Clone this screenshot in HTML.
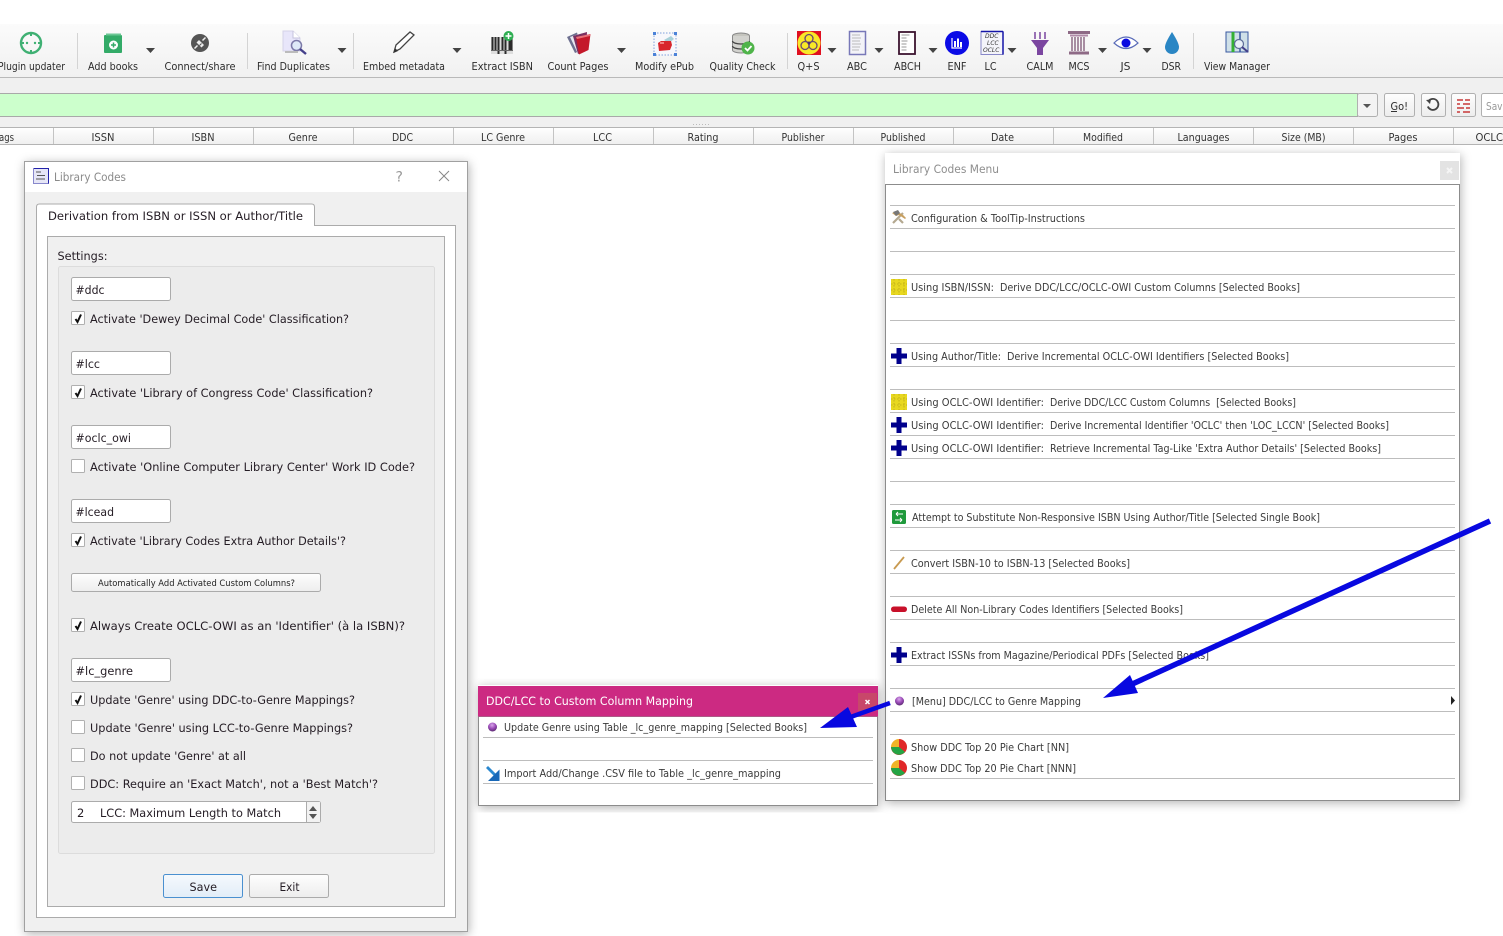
<!DOCTYPE html>
<html><head><meta charset="utf-8"><title>Library Codes</title>
<style>
html,body{margin:0;padding:0;background:#fff;width:1503px;height:936px;overflow:hidden}
svg{display:block}
text{font-family:"DejaVu Sans","Liberation Sans",sans-serif;white-space:pre;fill:#222}
.t{font-size:10.5px;fill:#2c2c2c}
.h{font-size:10.5px;fill:#333}
.d{font-size:11.5px;fill:#241c24}
.m{font-size:10.5px;fill:#3a3a3a}
.sep{stroke:#bdbdbd;stroke-width:1}
.tb{fill:#fff;stroke:#ababab}
.cb{fill:#fff;stroke:#b0b0b0}
.ck{fill:none;stroke:#111;stroke-width:2}
</style></head><body>
<svg width="1503" height="936" viewBox="0 0 1503 936" xmlns="http://www.w3.org/2000/svg">
<defs>
<linearGradient id="tbg" x1="0" y1="0" x2="0" y2="1"><stop offset="0" stop-color="#fbfbfb"/><stop offset="1" stop-color="#f1f1f1"/></linearGradient>
<linearGradient id="hbg" x1="0" y1="0" x2="0" y2="1"><stop offset="0" stop-color="#fff"/><stop offset="1" stop-color="#efefef"/></linearGradient>
<linearGradient id="btn" x1="0" y1="0" x2="0" y2="1"><stop offset="0" stop-color="#fefefe"/><stop offset="1" stop-color="#ededed"/></linearGradient>
<linearGradient id="sv" x1="0" y1="0" x2="0" y2="1"><stop offset="0" stop-color="#f5f9fd"/><stop offset="1" stop-color="#e2edf8"/></linearGradient>
<radialGradient id="sph" cx=".45" cy=".3" r=".7"><stop offset="0" stop-color="#d9a8ea"/><stop offset=".55" stop-color="#9b4bb8"/><stop offset="1" stop-color="#5a2a70"/></radialGradient>
<filter id="sh" x="-5%" y="-5%" width="110%" height="110%"><feDropShadow dx="1" dy="2" stdDeviation="5" flood-color="#000" flood-opacity=".3"/></filter>
</defs>

<!-- toolbar -->
<rect x="0" y="24" width="1503" height="53" fill="url(#tbg)"/>
<rect x="0" y="77" width="1503" height="50" fill="#f0f0f0"/>
<line x1="0" y1="77.5" x2="1503" y2="77.5" stroke="#b9b9b9"/>
<g stroke="#d4d4d4"><line x1="77.5" y1="33" x2="77.5" y2="69"/><line x1="247.5" y1="33" x2="247.5" y2="69"/><line x1="353.5" y1="33" x2="353.5" y2="69"/><line x1="787.5" y1="33" x2="787.5" y2="69"/><line x1="1193.5" y1="33" x2="1193.5" y2="69"/></g>

<!-- toolbar icons -->
<circle cx="31" cy="43" r="10" fill="none" stroke="#3fb073" stroke-width="2.4"/>
<path d="M31 32v4M31 50v4M20 43h4M38 43h4" stroke="#3fb073" stroke-width="2"/><circle cx="27" cy="43" r="1.2" fill="#3fb073"/><circle cx="35" cy="43" r="1.2" fill="#3fb073"/>
<rect x="104" y="35" width="18" height="18" rx="1" fill="#33ab68"/><rect x="106" y="33.500" width="15" height="2" fill="#6cc795"/><circle cx="113.500" cy="45" r="4.500" fill="#fff"/><path d="M113.500 42.500v5M111 45h5" stroke="#33ab68" stroke-width="1.500"/>
<circle cx="200" cy="43" r="9" fill="#555"/><path d="M194.500 48.500l3-3M205.500 37.500l-3 3" stroke="#eee" stroke-width="1.500"/><path d="M196.500 42.500l2.500-2.500 5 5-2.500 2.500z" fill="#eee"/><path d="M199.500 45.500l2-2" stroke="#555"/>
<path d="M283 31h10l7 7v13h-17z" fill="#e8e6fa" stroke="#d5d3e8"/><path d="M293 31v7h7" fill="#fff" stroke="#c5c3dc"/><circle cx="296.500" cy="45.500" r="5" fill="#dfeaf8" stroke="#7c7aa8" stroke-width="1.500"/><path d="M300 49l6 5" stroke="#44408a" stroke-width="2.400"/><path d="M285 52h13" stroke="#bbb" stroke-width="2"/>
<path d="M394 52l2-7 14-13 4 3-14 14z" fill="#fff" stroke="#444" stroke-width="1.300"/><path d="M393.500 53l1.500-5 3 3z" fill="#333"/>
<rect x="491" y="37" width="22" height="17" fill="#ddd"/><path d="M492.500 37v13M495.500 37v13M498.500 37v17M502.500 37v13M505.500 37v17M509.500 37v13M511.500 37v13" stroke="#2a2a2a" stroke-width="2"/><path d="M491 50.500h22" stroke="#666"/><circle cx="508.500" cy="36" r="5" fill="#2eae52"/><path d="M508.500 33v6M505.500 36h6" stroke="#fff" stroke-width="1.500"/>
<path d="M567 37L577 32.500L582 50L575 53z" fill="#6e7090"/><path d="M570 37L582 33L585 52L578 54z" fill="#e8e8f0"/><path d="M573 36L587 32L586 50L578 54z" fill="#7a3060"/><path d="M576 37L590.500 34L588.500 50L579 54.500z" fill="#c4182a"/><path d="M576 37L590.500 34L590 36L577 39z" fill="#e87078"/>
<rect x="654" y="33" width="22" height="22" fill="#f7f7fb" stroke="#7fa0dc" stroke-dasharray="1.500 1.500"/><g fill="#4b82d8"><rect x="653" y="32" width="3" height="3"/><rect x="674" y="32" width="3" height="3"/><rect x="653" y="53" width="3" height="3"/><rect x="674" y="53" width="3" height="3"/></g><path d="M664 40l7-4 3 3-5 4z" fill="#a8d0d8"/><path d="M658 43l3-2 10 0 1 4-2 5-11 1z" fill="#d8262c"/><path d="M660 42h4v2h-4z" fill="#f08080"/>
<ellipse cx="741" cy="36" rx="8.500" ry="3" fill="#c4c4be" stroke="#888"/><path d="M732.500 36v14a8.500 3 0 0 0 17 0v-14" fill="#d2d2ce" stroke="#888"/><path d="M732.500 41a8.500 3 0 0 0 17 0M732.500 46a8.500 3 0 0 0 17 0" fill="none" stroke="#444" stroke-width="1.300"/><circle cx="748" cy="48" r="6.500" fill="#4fb44a"/><path d="M745 48l2.500 2.500 4-4.500" fill="none" stroke="#fff" stroke-width="1.800"/>
<rect x="797" y="31" width="24" height="24" fill="#e01020"/><circle cx="809" cy="43" r="11.500" fill="#f8e828"/><g fill="none" stroke="#6a4a70" stroke-width="1.300"><circle cx="809" cy="38.500" r="4"/><circle cx="805" cy="45.500" r="4"/><circle cx="813" cy="45.500" r="4"/></g><circle cx="809" cy="43" r="1.500" fill="#4a2a78"/>
<rect x="849.500" y="31.500" width="16" height="23" fill="#f3f3f8" stroke="#7878b8" stroke-width="1.500"/><path d="M852 35h8M852 38h9M852 41h8M852 44h9M852 47h8M852 50h7" stroke="#bbb"/>
<rect x="899" y="32" width="16" height="22" fill="#fff" stroke="#3c1430" stroke-width="1.800"/><path d="M901.500 35h8M901.500 38h5M901.500 41h6M901.500 44h5M901.500 47h5M901.500 50h5" stroke="#999"/>
<circle cx="957" cy="43" r="12" fill="#0a0ae6"/><path d="M952 38v10h10" fill="none" stroke="#fff" stroke-width="1.200"/><path d="M955 41v6M958 38.500v8.500M961 42v5" stroke="#fff" stroke-width="2"/>
<rect x="981" y="31.500" width="22" height="23" fill="#f4f4fa" stroke="#8888c8"/><path d="M981 31.500h22M1003 31.500v23" stroke="#1414a8" stroke-width="1.500"/>
<text x="985" y="38" font-size="6" font-style="italic" style="fill:#333">DDC</text><text x="987" y="45" font-size="6" font-style="italic" style="fill:#333">LCC</text><text x="983" y="52" font-size="6" font-style="italic" style="fill:#333">OCLC</text>
<path d="M1031 40h18l-6 8v7h-6v-7z" fill="#7b46a0"/><path d="M1035 32v7M1040 32v7M1045 32v7" stroke="#7b46a0" stroke-width="1.500"/>
<path d="M1068 31h22v3h-22z" fill="#8e6a86"/><path d="M1070 34.500h18v2h-18z" fill="#b08aa8"/><path d="M1072 37v14M1075 37v14M1078 37v14M1081 37v14M1084 37v14" stroke="#8e6a86" stroke-width="1.500"/><path d="M1069 51.500h20v3h-20z" fill="#8e6a86"/>
<path d="M1114 43q12-12 24 0q-12 11-24 0z" fill="#fff" stroke="#5a6cb8" stroke-width="1.200"/><circle cx="1126" cy="43" r="4.500" fill="#0a0ae0"/>
<path d="M1172 32q-7 11-7 15a7 7 0 0 0 14 0q0-4-7-15z" fill="#2a86c4"/>
<rect x="1226" y="32" width="22" height="20" fill="#cfe0e8" stroke="#3858a0"/><path d="M1233 32v20" stroke="#34b034" stroke-width="3"/><path d="M1240 32v20" stroke="#3858a0" stroke-width="1.500"/><circle cx="1239" cy="44" r="4.500" fill="#e8f0f8" stroke="#5c6c98" stroke-width="1.200"/><path d="M1242 47l6 5" stroke="#44408a" stroke-width="2"/>

<!-- dropdown carets -->
<g fill="#444"><path d="M146 48h9l-4.500 5zM337.500 48h9l-4.500 5zM452.500 48h9l-4.500 5zM617 48h9l-4.500 5zM827.500 48h9l-4.500 5zM874.500 48h9l-4.500 5zM928.500 48h9l-4.500 5zM1007.500 48h9l-4.500 5zM1098 48h9l-4.500 5zM1142.500 48h9l-4.500 5z"/></g>

<!-- toolbar labels -->
<g class="t">
<text class="t" x="-2" y="70" textLength="67" lengthAdjust="spacingAndGlyphs">Plugin updater</text>
<text class="t" x="88" y="70" textLength="50" lengthAdjust="spacingAndGlyphs">Add books</text>
<text class="t" x="164.500" y="70" textLength="71" lengthAdjust="spacingAndGlyphs">Connect/share</text>
<text class="t" x="257" y="70" textLength="73" lengthAdjust="spacingAndGlyphs">Find Duplicates</text>
<text class="t" x="363" y="70" textLength="82" lengthAdjust="spacingAndGlyphs">Embed metadata</text>
<text class="t" x="471.500" y="70" textLength="61.500" lengthAdjust="spacingAndGlyphs">Extract ISBN</text>
<text class="t" x="547.500" y="70" textLength="61" lengthAdjust="spacingAndGlyphs">Count Pages</text>
<text class="t" x="635" y="70" textLength="59" lengthAdjust="spacingAndGlyphs">Modify ePub</text>
<text class="t" x="709.500" y="70" textLength="66" lengthAdjust="spacingAndGlyphs">Quality Check</text>
<text class="t" x="797.500" y="70" textLength="22" lengthAdjust="spacingAndGlyphs">Q+S</text>
<text class="t" x="847" y="70" textLength="20" lengthAdjust="spacingAndGlyphs">ABC</text>
<text class="t" x="894" y="70" textLength="27" lengthAdjust="spacingAndGlyphs">ABCH</text>
<text class="t" x="947.500" y="70" textLength="19" lengthAdjust="spacingAndGlyphs">ENF</text>
<text class="t" x="984.500" y="70" textLength="12" lengthAdjust="spacingAndGlyphs">LC</text>
<text class="t" x="1026.500" y="70" textLength="27" lengthAdjust="spacingAndGlyphs">CALM</text>
<text class="t" x="1068.500" y="70" textLength="21" lengthAdjust="spacingAndGlyphs">MCS</text>
<text class="t" x="1120.500" y="70" textLength="10" lengthAdjust="spacingAndGlyphs">JS</text>
<text class="t" x="1161.500" y="70" textLength="19.500" lengthAdjust="spacingAndGlyphs">DSR</text>
<text class="t" x="1204" y="70" textLength="66" lengthAdjust="spacingAndGlyphs">View Manager</text>
</g>

<!-- search row -->
<rect x="-2" y="93.500" width="1359.500" height="23" fill="#ccffcc" stroke="#a9a9a9"/>
<rect x="1357.500" y="93.500" width="20" height="23" rx="2" fill="#f3f3f3" stroke="#b0b0b0"/><path d="M1363 104h8l-4 4z" fill="#555"/>
<rect x="1384.500" y="93.500" width="30" height="23" rx="2" fill="url(#btn)" stroke="#b0b0b0"/>
<text class="t" x="1390.500" y="110" textLength="17.500" lengthAdjust="spacingAndGlyphs">Go!</text><path d="M1391 111.500h6" stroke="#333"/>
<rect x="1421.500" y="93.500" width="24" height="23" rx="2" fill="url(#btn)" stroke="#b0b0b0"/>
<path d="M1429 100.500a5.500 5.500 0 1 1-1.200 6" fill="none" stroke="#444" stroke-width="1.800"/><path d="M1426 100l5-.5-1 4.500z" fill="#444"/>
<rect x="1451.500" y="93.500" width="24" height="23" rx="2" fill="url(#btn)" stroke="#b0b0b0"/>
<path d="M1457 100h6M1465 100h5M1457 104h3M1463 104h7M1457 108h7M1466 108h4M1457 112h3M1463 112h7" stroke="#c83838" stroke-width="1.600"/>
<rect x="1481.500" y="93.500" width="30" height="23" rx="2" fill="#fff" stroke="#b0b0b0"/>
<text class="t" x="1486" y="110" textLength="22" lengthAdjust="spacingAndGlyphs" style="fill:#999">Save</text>
<path d="M693 124.500h17" stroke="#bbb" stroke-dasharray="1 2"/>

<!-- table header -->
<rect x="0" y="127.500" width="1503" height="17" fill="url(#hbg)"/>
<path d="M0 127.500h1503M0 144.500h1503" stroke="#b4b4b4"/>
<g stroke="#c4c4c4"><path d="M53.500 128v16M153.500 128v16M253.500 128v16M353.500 128v16M453.500 128v16M553.500 128v16M653.500 128v16M753.500 128v16M853.500 128v16M953.500 128v16M1053.500 128v16M1153.500 128v16M1253.500 128v16M1353.500 128v16M1453.500 128v16"/></g>
<text class="h" x="-1" y="141" textLength="15" lengthAdjust="spacingAndGlyphs">ags</text>
<text class="h" x="91.500" y="141" textLength="23" lengthAdjust="spacingAndGlyphs">ISSN</text>
<text class="h" x="191.500" y="141" textLength="23" lengthAdjust="spacingAndGlyphs">ISBN</text>
<text class="h" x="288.500" y="141" textLength="29" lengthAdjust="spacingAndGlyphs">Genre</text>
<text class="h" x="392" y="141" textLength="21" lengthAdjust="spacingAndGlyphs">DDC</text>
<text class="h" x="481" y="141" textLength="44" lengthAdjust="spacingAndGlyphs">LC Genre</text>
<text class="h" x="593" y="141" textLength="19" lengthAdjust="spacingAndGlyphs">LCC</text>
<text class="h" x="687.500" y="141" textLength="31" lengthAdjust="spacingAndGlyphs">Rating</text>
<text class="h" x="781.500" y="141" textLength="43" lengthAdjust="spacingAndGlyphs">Publisher</text>
<text class="h" x="880.500" y="141" textLength="45" lengthAdjust="spacingAndGlyphs">Published</text>
<text class="h" x="991" y="141" textLength="23" lengthAdjust="spacingAndGlyphs">Date</text>
<text class="h" x="1083" y="141" textLength="40" lengthAdjust="spacingAndGlyphs">Modified</text>
<text class="h" x="1177.500" y="141" textLength="52" lengthAdjust="spacingAndGlyphs">Languages</text>
<text class="h" x="1281.500" y="141" textLength="44" lengthAdjust="spacingAndGlyphs">Size (MB)</text>
<text class="h" x="1388.500" y="141" textLength="29" lengthAdjust="spacingAndGlyphs">Pages</text>
<text class="h" x="1475.500" y="141" textLength="27.500" lengthAdjust="spacingAndGlyphs">OCLC</text>

<!-- Library Codes dialog -->
<g filter="url(#sh)"><rect x="24.500" y="161.500" width="443" height="770" fill="#f0f0f0" stroke="#a0a0a0"/></g>
<rect x="25" y="162" width="442" height="30" fill="#fff"/>
<rect x="33.500" y="168.500" width="15" height="15" fill="#e6e6f6" stroke="#8888cc"/><path d="M36 172h5M37 175.500h8M36 179h9" stroke="#555"/><path d="M34 168.500h14.500v15" fill="none" stroke="#2222aa"/>
<text class="d" x="54" y="181" textLength="72" lengthAdjust="spacingAndGlyphs" style="fill:#8a8a8a">Library Codes</text>
<text x="395.500" y="181.500" font-size="14" style="fill:#999">?</text>
<path d="M439 171l10 10M449 171l-10 10" stroke="#888"/>
<rect x="36.500" y="225.500" width="419" height="692" fill="#fff" stroke="#ababab"/>
<path d="M36.500 226v-19q0-3 3-3h272q3 0 3 3v19" fill="#fff" stroke="#ababab"/><rect x="37" y="224" width="277" height="3" fill="#fff"/>
<text class="d" x="48" y="220" textLength="255" lengthAdjust="spacingAndGlyphs">Derivation from ISBN or ISSN or Author/Title</text>
<rect x="47.500" y="236.500" width="397" height="670" fill="#f0f0f0" stroke="#ababab"/>
<text class="d" x="57.500" y="260" textLength="50" lengthAdjust="spacingAndGlyphs">Settings:</text>
<rect x="58.500" y="266.500" width="376" height="587" rx="2" fill="#ececec" stroke="#dcdcdc"/>

<g class="tb">
<rect class="tb" x="71.500" y="277.500" width="99" height="23" rx="2"/>
<rect class="tb" x="71.500" y="351.500" width="99" height="23" rx="2"/>
<rect class="tb" x="71.500" y="425.500" width="99" height="23" rx="2"/>
<rect class="tb" x="71.500" y="499.500" width="99" height="23" rx="2"/>
<rect class="tb" x="71.500" y="658.500" width="99" height="23" rx="2"/>
</g>
<text class="d" x="75.500" y="294" textLength="29" lengthAdjust="spacingAndGlyphs">#ddc</text>
<text class="d" x="75.500" y="368" textLength="24.500" lengthAdjust="spacingAndGlyphs">#lcc</text>
<text class="d" x="75.500" y="442" textLength="55.500" lengthAdjust="spacingAndGlyphs">#oclc_owi</text>
<text class="d" x="75.500" y="516" textLength="38.500" lengthAdjust="spacingAndGlyphs">#lcead</text>
<text class="d" x="75.500" y="675" textLength="57.500" lengthAdjust="spacingAndGlyphs">#lc_genre</text>

<rect class="cb" x="71.500" y="311.500" width="13" height="13" rx="1"/><path class="ck" d="M75.500 319l2 3 3.500-7.500"/>
<rect class="cb" x="71.500" y="385.500" width="13" height="13" rx="1"/><path class="ck" d="M75.500 393l2 3 3.500-7.500"/>
<rect class="cb" x="71.500" y="459.500" width="13" height="13" rx="1"/>
<rect class="cb" x="71.500" y="533.500" width="13" height="13" rx="1"/><path class="ck" d="M75.500 541l2 3 3.500-7.500"/>
<rect class="cb" x="71.500" y="618.500" width="13" height="13" rx="1"/><path class="ck" d="M75.500 626l2 3 3.500-7.500"/>
<rect class="cb" x="71.500" y="692.500" width="13" height="13" rx="1"/><path class="ck" d="M75.500 700l2 3 3.500-7.500"/>
<rect class="cb" x="71.500" y="720.500" width="13" height="13" rx="1"/>
<rect class="cb" x="71.500" y="748.500" width="13" height="13" rx="1"/>
<rect class="cb" x="71.500" y="776.500" width="13" height="13" rx="1"/>

<text class="d" x="90" y="323" textLength="259" lengthAdjust="spacingAndGlyphs">Activate 'Dewey Decimal Code' Classification?</text>
<text class="d" x="90" y="397" textLength="283" lengthAdjust="spacingAndGlyphs">Activate 'Library of Congress Code' Classification?</text>
<text class="d" x="90" y="471" textLength="325" lengthAdjust="spacingAndGlyphs">Activate 'Online Computer Library Center' Work ID Code?</text>
<text class="d" x="90" y="545" textLength="256" lengthAdjust="spacingAndGlyphs">Activate 'Library Codes Extra Author Details'?</text>
<rect x="71.500" y="573.500" width="249" height="18" rx="2" fill="url(#btn)" stroke="#ababab"/>
<text x="98" y="586" font-size="9" textLength="197" lengthAdjust="spacingAndGlyphs">Automatically Add Activated Custom Columns?</text>
<text class="d" x="90" y="630" textLength="315" lengthAdjust="spacingAndGlyphs">Always Create OCLC-OWI as an 'Identifier' (à la ISBN)?</text>
<text class="d" x="90" y="704" textLength="265" lengthAdjust="spacingAndGlyphs">Update 'Genre' using DDC-to-Genre Mappings?</text>
<text class="d" x="90" y="732" textLength="263" lengthAdjust="spacingAndGlyphs">Update 'Genre' using LCC-to-Genre Mappings?</text>
<text class="d" x="90" y="760" textLength="156" lengthAdjust="spacingAndGlyphs">Do not update 'Genre' at all</text>
<text class="d" x="90" y="788" textLength="288" lengthAdjust="spacingAndGlyphs">DDC: Require an 'Exact Match', not a 'Best Match'?</text>
<rect class="tb" x="71.500" y="801.500" width="249" height="21" rx="2"/>
<path d="M306.500 802v20" stroke="#ababab"/><rect x="307" y="802" width="13" height="20" fill="#f2f2f2"/><path d="M313 806l4 5h-8zM313 819l4-5h-8z" fill="#555"/>
<text class="d" x="77" y="817">2</text>
<text class="d" x="100" y="817" textLength="181" lengthAdjust="spacingAndGlyphs">LCC: Maximum Length to Match</text>
<rect x="163.500" y="874.500" width="79" height="23" rx="2" fill="url(#sv)" stroke="#4a90d0"/>
<text class="d" x="189.500" y="891" textLength="27.500" lengthAdjust="spacingAndGlyphs">Save</text>
<rect x="249.500" y="874.500" width="79" height="23" rx="2" fill="url(#btn)" stroke="#ababab"/>
<text class="d" x="279.500" y="891" textLength="20" lengthAdjust="spacingAndGlyphs">Exit</text>

<!-- Library Codes Menu -->
<g filter="url(#sh)"><rect x="885" y="153" width="575" height="648" fill="#fff"/></g>
<path d="M885.500 184.500h574v616h-574z" fill="#fff" stroke="#8c8c8c"/>
<text class="d" x="893" y="173" textLength="106" lengthAdjust="spacingAndGlyphs" style="fill:#8e8e8e">Library Codes Menu</text>
<rect x="1440" y="161" width="19" height="19" fill="#e3e3e3"/><path d="M1447 168l5 5M1452 168l-5 5" stroke="#f5f5f5" stroke-width="2"/>
<path class="sep" d="M890 205.500h565M890 228.500h565M890 251.500h565M890 274.500h565M890 297.500h565M890 320.500h565M890 343.500h565M890 366.500h565M890 389.500h565M890 412.500h565M890 435.500h565M890 458.500h565M890 481.500h565M890 504.500h565M890 527.500h565M890 550.500h565M890 573.500h565M890 596.500h565M890 619.500h565M890 642.500h565M890 665.500h565M890 688.500h565M890 711.500h565M890 734.500h565M890 778.500h565"/>

<path d="M893 223l10-10M903 223l-4-4" stroke="#b4a890" stroke-width="2.200" fill="none"/><path d="M892 213q7-3 14 5l-1 1-6-4-3 1z" fill="#c8a060"/><path d="M893 212l5-2 2 3-4 3z" fill="#777"/>
<rect x="891" y="279" width="16" height="16" fill="#e8d820"/><path d="M894 279v16M899 279v16M904 279v16M891 284h16M891 290h16" stroke="#b8a818" stroke-dasharray="1.500 1.500" stroke-width=".8"/>
<rect x="891" y="394" width="16" height="16" fill="#e8d820"/><path d="M894 394v16M899 394v16M904 394v16M891 399h16M891 405h16" stroke="#b8a818" stroke-dasharray="1.500 1.500" stroke-width=".8"/>
<g fill="#00008c">
<path d="M896.500 348h5v5.500h5.500v5h-5.500v5.500h-5v-5.500h-5.500v-5h5.500z"/>
<path d="M896.500 417h5v5.500h5.500v5h-5.500v5.500h-5v-5.500h-5.500v-5h5.500z"/>
<path d="M896.500 440h5v5.500h5.500v5h-5.500v5.500h-5v-5.500h-5.500v-5h5.500z"/>
<path d="M896.500 647h5v5.500h5.500v5h-5.500v5.500h-5v-5.500h-5.500v-5h5.500z"/>
</g>
<rect x="892" y="510" width="14" height="14" rx="1.500" fill="#1f9a3c"/><path d="M896 514h7M896 514l2-2M896 514l2 2M902 520h-7M902 520l-2-2M902 520l-2 2" stroke="#fff" fill="none"/>
<path d="M894 569l10-12" stroke="#c89a50" stroke-width="1.800"/>
<rect x="891" y="606.500" width="16" height="5.500" rx="2.700" fill="#c8102a"/>
<circle cx="899.500" cy="701" r="4.500" fill="url(#sph)"/>
<path d="M899 739a8 8 0 0 1 0 16a8 8 0 0 1-8-8" fill="#e02828"/><path d="M891 747a8 8 0 0 1 8-8v8z" fill="#f0b428"/><path d="M891 747h8l6 5a8 8 0 0 1-14-5z" fill="#24a444"/>
<path d="M899 760a8 8 0 0 1 0 16a8 8 0 0 1-8-8" fill="#e02828"/><path d="M891 768a8 8 0 0 1 8-8v8z" fill="#f0b428"/><path d="M891 768h8l6 5a8 8 0 0 1-14-5z" fill="#24a444"/>
<path d="M1451 696l4 4.500-4 4.500z" fill="#222"/>

<text class="m" x="911" y="222" textLength="174" lengthAdjust="spacingAndGlyphs">Configuration &amp; ToolTip-Instructions</text>
<text class="m" x="911" y="291" textLength="83" lengthAdjust="spacingAndGlyphs">Using ISBN/ISSN:</text>
<text class="m" x="1000" y="291" textLength="300" lengthAdjust="spacingAndGlyphs">Derive DDC/LCC/OCLC-OWI Custom Columns [Selected Books]</text>
<text class="m" x="911" y="360" textLength="90" lengthAdjust="spacingAndGlyphs">Using Author/Title:</text>
<text class="m" x="1007" y="360" textLength="282" lengthAdjust="spacingAndGlyphs">Derive Incremental OCLC-OWI Identifiers [Selected Books]</text>
<text class="m" x="911" y="406" textLength="133" lengthAdjust="spacingAndGlyphs">Using OCLC-OWI Identifier:</text>
<text class="m" x="1050" y="406" textLength="246" lengthAdjust="spacingAndGlyphs">Derive DDC/LCC Custom Columns  [Selected Books]</text>
<text class="m" x="911" y="429" textLength="133" lengthAdjust="spacingAndGlyphs">Using OCLC-OWI Identifier:</text>
<text class="m" x="1050" y="429" textLength="339" lengthAdjust="spacingAndGlyphs">Derive Incremental Identifier 'OCLC' then 'LOC_LCCN' [Selected Books]</text>
<text class="m" x="911" y="452" textLength="133" lengthAdjust="spacingAndGlyphs">Using OCLC-OWI Identifier:</text>
<text class="m" x="1050" y="452" textLength="331" lengthAdjust="spacingAndGlyphs">Retrieve Incremental Tag-Like 'Extra Author Details' [Selected Books]</text>
<text class="m" x="912" y="521" textLength="408" lengthAdjust="spacingAndGlyphs">Attempt to Substitute Non-Responsive ISBN Using Author/Title [Selected Single Book]</text>
<text class="m" x="911" y="567" textLength="219" lengthAdjust="spacingAndGlyphs">Convert ISBN-10 to ISBN-13 [Selected Books]</text>
<text class="m" x="911" y="613" textLength="272" lengthAdjust="spacingAndGlyphs">Delete All Non-Library Codes Identifiers [Selected Books]</text>
<text class="m" x="911" y="659" textLength="298" lengthAdjust="spacingAndGlyphs">Extract ISSNs from Magazine/Periodical PDFs [Selected Books]</text>
<text class="m" x="912" y="705" textLength="169" lengthAdjust="spacingAndGlyphs">[Menu] DDC/LCC to Genre Mapping</text>
<text class="m" x="911" y="751" textLength="158" lengthAdjust="spacingAndGlyphs">Show DDC Top 20 Pie Chart [NN]</text>
<text class="m" x="911" y="772" textLength="165" lengthAdjust="spacingAndGlyphs">Show DDC Top 20 Pie Chart [NNN]</text>

<!-- Mapping window -->
<g filter="url(#sh)"><rect x="478" y="685" width="400" height="121" fill="#fff"/></g>
<path d="M478.500 716.500h399v89h-399z" fill="#fff" stroke="#8c8c8c"/>
<rect x="478" y="686" width="400" height="30.500" fill="#cc2a82"/>
<text class="d" x="486" y="705" textLength="207" lengthAdjust="spacingAndGlyphs" style="fill:#fff">DDC/LCC to Custom Column Mapping</text>
<rect x="858" y="693" width="19" height="18" fill="#c8476a"/>
<path d="M865.500 700l4 4M869.500 700l-4 4" stroke="#fff" stroke-width="1.500"/>
<path class="sep" d="M483 737.500h390M483 760.500h390M483 783.500h390"/>
<circle cx="492.500" cy="727" r="4.500" fill="url(#sph)"/>
<path d="M486 768l2-2 9 9-2 2z" fill="#2a88d0"/><path d="M499.500 769.500v11.500h-11.500z" fill="#1868b8"/>
<text class="m" x="504" y="731" textLength="303" lengthAdjust="spacingAndGlyphs">Update Genre using Table _lc_genre_mapping [Selected Books]</text>
<text class="m" x="504" y="777" textLength="277" lengthAdjust="spacingAndGlyphs">Import Add/Change .CSV file to Table _lc_genre_mapping</text>

<!-- annotation arrows -->
<path d="M1490 521L1128 686" stroke="#0808e0" stroke-width="5.500" fill="none"/>
<path d="M1103 698L1130 675L1138 693z" fill="#0808e0"/>
<path d="M890 703L845 719" stroke="#0808e0" stroke-width="4.500" fill="none"/>
<path d="M820 728L848 707L857 727z" fill="#0808e0"/>
</svg>
</body></html>
